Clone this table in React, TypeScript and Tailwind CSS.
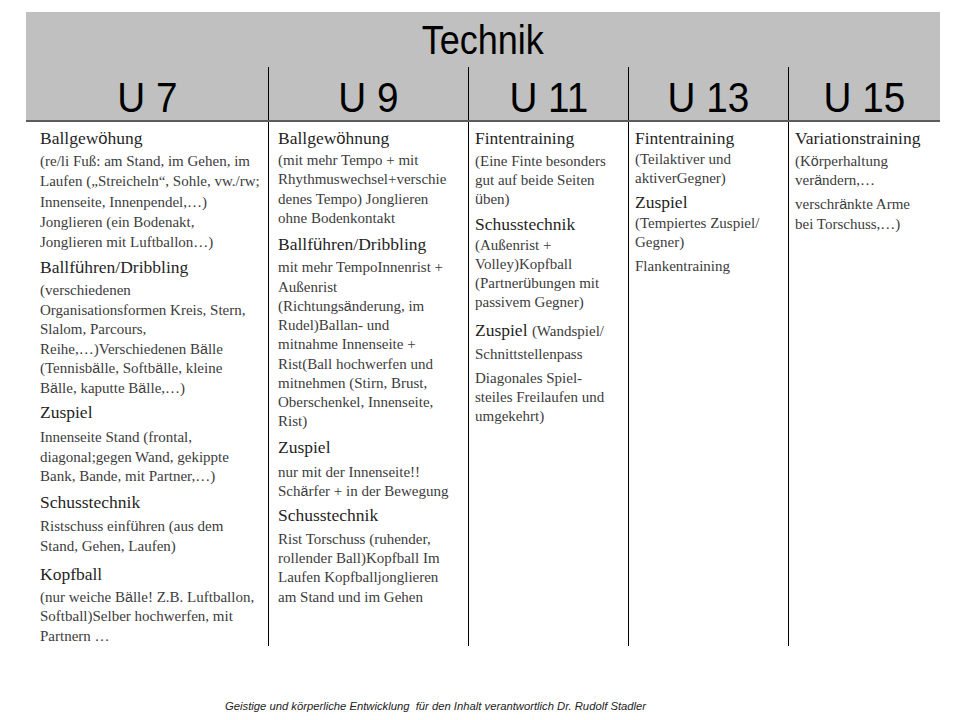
import { ReactNode } from "react";

// sans-serif umlaut, as in the original slide
function Um({ children }: { children: ReactNode }) {
  return <span className="font-['Liberation_Sans',sans-serif] text-[0.95em]">{children}</span>;
}

function H({ children, className = "" }: { children: ReactNode; className?: string }) {
  return (
    <div className={"whitespace-nowrap text-[17.5px] leading-[24px] text-[#1f1f1f] " + className}>
      {children}
    </div>
  );
}

function S({ children, className = "" }: { children: ReactNode; className?: string }) {
  return (
    <div className={"whitespace-nowrap text-[15px] leading-[19.5px] text-[#3c3c3c] " + className}>
      {children}
    </div>
  );
}

const heads = ["U 7", "U 9", "U 11", "U 13", "U 15"];

export default function App() {
  return (
    <div className="w-[960px] h-[720px] bg-white overflow-hidden pt-[12px] pl-[26px]">
      {/* Table */}
      <div className="w-[914px]">
        {/* Title row */}
        <div className="h-[55px] bg-[#c0c0c0] flex items-center justify-center">
          <span className="inline-block scale-x-90 font-['Liberation_Sans',sans-serif] text-[40px] leading-[40px] text-black">
            Technik
          </span>
        </div>

        {/* Age group row */}
        <div className="grid grid-cols-[242px_200px_160px_160px_152px] h-[55px] bg-[#c0c0c0] border-b-2 border-[#5c5c5c]">
          {heads.map((h, i) => (
            <div
              key={h}
              className={
                "flex items-center justify-center pt-[7px] " + (i > 0 ? "border-l border-black" : "")
              }
            >
              <span className="inline-block scale-x-90 font-['Liberation_Sans',sans-serif] text-[43px] leading-[43px] text-black">
                {h}
              </span>
            </div>
          ))}
        </div>

        {/* Body */}
        <div className="grid grid-cols-[242px_200px_160px_160px_152px] h-[519px] font-['Liberation_Serif',serif]">
          {/* U 7 */}
          <div className="pt-[4px] pl-[14px]">
            <H className="text-[16px]">
              Ballgew<Um>ö</Um>hung
            </H>
            <S className="leading-[20.25px]">
              (re/li Fuß: am Stand, im Gehen, im
              <br />
              Laufen („Streicheln“, Sohle, vw./rw;
              <br />
              Innenseite, Innenpendel,…)
              <br />
              Jonglieren (ein Bodenakt,
              <br />
              Jonglieren mit Luftballon…)
            </S>
            <H className="mt-[3px]">
              Ballf<Um>ü</Um>hren/Dribbling
            </H>
            <S className="mt-[1px] leading-[18.6px]">
              (verschiedenen
              <br />
              Organisationsformen Kreis, Stern,
              <br />
              Slalom, Parcours,
              <br />
              Reihe,…)Verschiedenen B<Um>ä</Um>lle
              <br />
              (Tennisb<Um>ä</Um>lle, Softb<Um>ä</Um>lle, kleine
              <br />
              B<Um>ä</Um>lle, kaputte B<Um>ä</Um>lle,…)
            </S>
            <H className="mt-[2px]">Zuspiel</H>
            <S className="mt-[4px]">
              Innenseite Stand (frontal,
              <br />
              diagonal;gegen Wand, gekippte
              <br />
              Bank, Bande, mit Partner,…)
            </S>
            <H className="mt-[3px]">Schusstechnik</H>
            <S className="mt-[2px] leading-[20px]">
              Ristschuss einf<Um>ü</Um>hren (aus dem
              <br />
              Stand, Gehen, Laufen)
            </S>
            <H className="mt-[6px]">Kopfball</H>
            <S className="mt-[2px]">
              (nur weiche B<Um>ä</Um>lle! Z.B. Luftballon,
              <br />
              Softball)Selber hochwerfen, mit
              <br />
              Partnern …
            </S>
          </div>

          {/* U 9 */}
          <div className="border-l border-black pt-[4px] pl-[9px]">
            <H className="text-[16px]">
              Ballgew<Um>ö</Um>hnung
            </H>
            <S className="leading-[19.33px]">
              (mit mehr Tempo + mit
              <br />
              Rhythmuswechsel+verschie
              <br />
              denes Tempo) Jonglieren
              <br />
              ohne Bodenkontakt
            </S>
            <H className="mt-[4px]">
              Ballf<Um>ü</Um>hren/Dribbling
            </H>
            <S className="mt-[1px] leading-[19.25px]">
              mit mehr TempoInnenrist +
              <br />
              Außenrist
              <br />
              (Richtungs<Um>ä</Um>nderung, im
              <br />
              Rudel)Ballan- und
              <br />
              mitnahme Innenseite +
              <br />
              Rist(Ball hochwerfen und
              <br />
              mitnehmen (Stirn, Brust,
              <br />
              Oberschenkel, Innenseite,
              <br />
              Rist)
            </S>
            <H className="mt-[3px]">Zuspiel</H>
            <S className="mt-[4px]">
              nur mit der Innenseite!!
              <br />
              Sch<Um>ä</Um>rfer + in der Bewegung
            </S>
            <H className="mt-[1px]">Schusstechnik</H>
            <S className="mt-[3px] leading-[19.33px]">
              Rist Torschuss (ruhender,
              <br />
              rollender Ball)Kopfball Im
              <br />
              Laufen Kopfballjonglieren
              <br />
              am Stand und im Gehen
            </S>
          </div>

          {/* U 11 */}
          <div className="border-l border-black pt-[4px] pl-[6px]">
            <H>Fintentraining</H>
            <S className="mt-[2px] leading-[19px]">
              (Eine Finte besonders
              <br />
              gut auf beide Seiten
              <br />
              <Um>ü</Um>ben)
            </S>
            <H className="mt-[3px]">Schusstechnik</H>
            <S className="leading-[19px]">
              (Außenrist +
              <br />
              Volley)Kopfball
              <br />
              (Partner<Um>ü</Um>bungen mit
              <br />
              passivem Gegner)
            </S>
            <H className="mt-[6px]">
              Zuspiel <span className="text-[15px] text-[#3c3c3c]">(Wandspiel/</span>
            </H>
            <S className="mt-[2px]">Schnittstellenpass</S>
            <S className="mt-[4px] leading-[19px]">
              Diagonales Spiel-
              <br />
              steiles Freilaufen und
              <br />
              umgekehrt)
            </S>
          </div>

          {/* U 13 */}
          <div className="border-l border-black pt-[4px] pl-[6px]">
            <H>Fintentraining</H>
            <S className="leading-[19px]">
              (Teilaktiver und
              <br />
              aktiverGegner)
            </S>
            <H className="mt-[2px]">Zuspiel</H>
            <S className="leading-[19px]">
              (Tempiertes Zuspiel/
              <br />
              Gegner)
            </S>
            <S className="mt-[5px]">Flankentraining</S>
          </div>

          {/* U 15 */}
          <div className="border-l border-black pt-[4px] pl-[6px]">
            <H>Variationstraining</H>
            <S className="mt-[2px] leading-[19px]">
              (K<Um>ö</Um>rperhaltung
              <br />
              ver<Um>ä</Um>ndern,…
            </S>
            <S className="mt-[4px] leading-[20px]">
              verschr<Um>ä</Um>nkte Arme
              <br />
              bei Torschuss,…)
            </S>
          </div>
        </div>
      </div>

      {/* Footer */}
      <div className="mt-[58px] pl-[199px] whitespace-pre italic font-['Liberation_Sans',sans-serif] text-[11.25px] leading-[14px] text-[#222]">
        Geistige und körperliche Entwicklung  für den Inhalt verantwortlich Dr. Rudolf Stadler
      </div>
    </div>
  );
}
